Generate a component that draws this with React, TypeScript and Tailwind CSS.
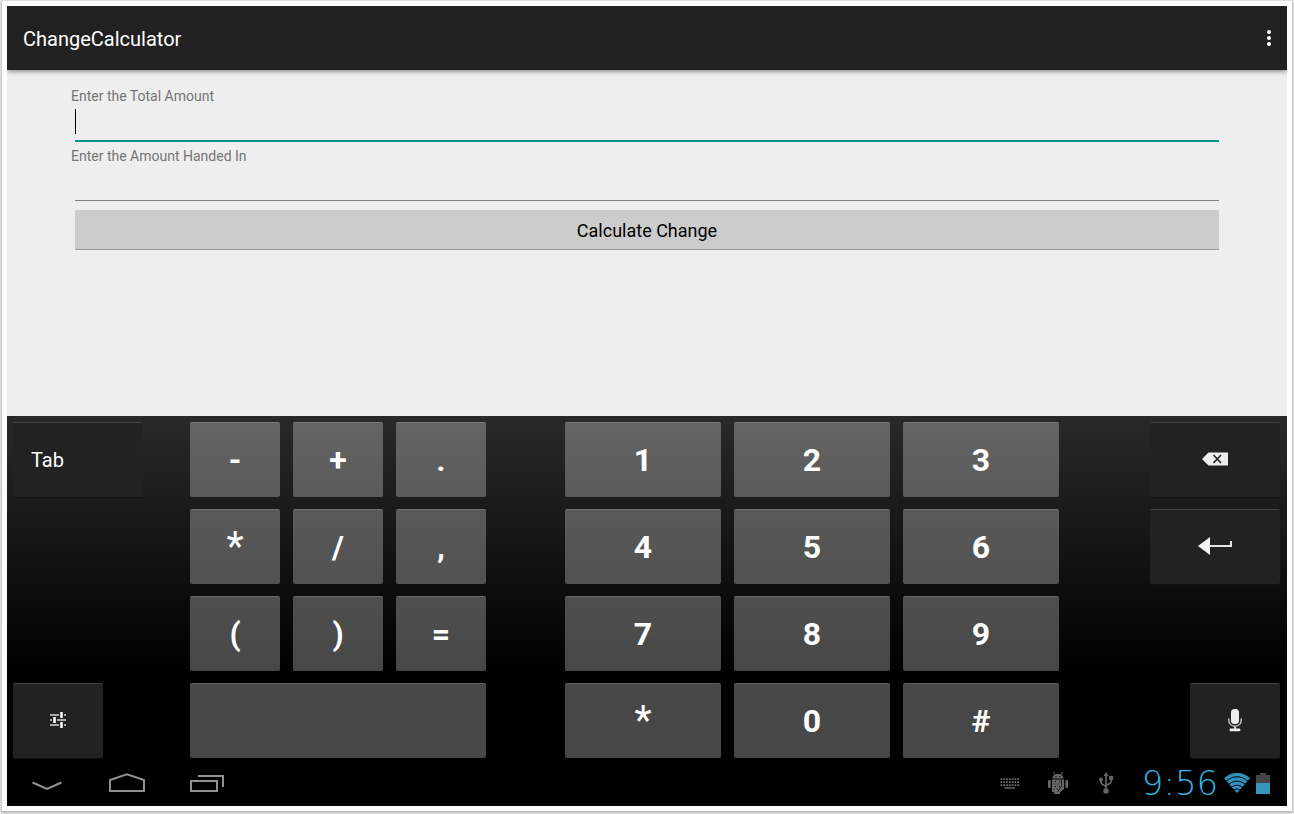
import { useState } from 'react';
import type { ReactNode } from 'react';

const SYMBOLS = ['-', '+', '.', '*', '/', ',', '(', ')', '='];
const DIGITS = ['1', '2', '3', '4', '5', '6', '7', '8', '9', '*', '0', '#'];

function LightKey({ label, name, className = '' }: { label: string; name?: string; className?: string }) {
  const face = label === '*' ? 'text-[40px] font-normal' : 'text-[32px] font-bold';
  return (
    <button
      type="button"
      aria-label={name}
      className={`h-[75px] rounded-xs border-t border-white/15 bg-white/28 text-center leading-[74px] text-white ${face} ${className}`}
    >
      {label}
    </button>
  );
}

function DarkKey({ name, className = '', children }: { name: string; className?: string; children: ReactNode }) {
  return (
    <button
      type="button"
      aria-label={name}
      className={`flex h-[75px] items-center rounded-xs border-t border-[#444] bg-[#222] text-xl text-white shadow-[0_1px_0_#111] ${className}`}
    >
      {children}
    </button>
  );
}

function BackspaceIcon() {
  return (
    <svg width="28" height="14" viewBox="0 0 28 14">
      <path d="M1 7 7.500 .5H27V13.500H7.500Z" fill="#eee" />
      <path d="m12.500 3 7.500 8m0-8-7.500 8" stroke="#222" strokeWidth="1.600" />
    </svg>
  );
}

function EnterIcon() {
  return (
    <svg width="36" height="20" viewBox="0 0 36 20">
      <path d="M1 10 13 1V19Z" fill="#f4f4f4" />
      <path d="M12 10H34V5" fill="none" stroke="#e4e4e4" strokeWidth="2" />
    </svg>
  );
}

function TuneIcon() {
  return (
    <svg width="16" height="16" viewBox="0 0 16 16">
      <path d="M0 3H9M14 3H16M0 8H2M7 8H16M0 13H9M14 13H16" stroke="#aaa" strokeWidth="2" />
      <path d="M11.500 0V6M4.500 5V11M11.500 10V16" stroke="#fff" strokeWidth="2.600" />
    </svg>
  );
}

function MicIcon() {
  return (
    <svg width="14" height="24" viewBox="0 0 14 24">
      <rect x="3" y="1" width="8" height="15" rx="3.500" fill="#eee" />
      <path d="M.8 10.500V12C.8 16 3.500 18.200 7 18.200S13.200 16 13.200 12V10.500" fill="none" stroke="#ccc" strokeWidth="1.400" />
      <path d="M7 18V21" stroke="#ccc" strokeWidth="2" />
      <rect x="1.500" y="20.500" width="11" height="2.800" rx="1.400" fill="#eee" />
    </svg>
  );
}

function KeyboardIcon() {
  return (
    <svg width="20" height="11" viewBox="0 0 20 11">
      <path d="M.5 1.200H20M.5 4.200H20M.5 7.200H20" stroke="#6a6a6a" strokeWidth="1.800" strokeDasharray="1.800 1" />
      <path d="M4.500 10H15" stroke="#6a6a6a" strokeWidth="1.400" />
    </svg>
  );
}

function DebugIcon() {
  return (
    <svg width="20" height="22" viewBox="0 0 20 22">
      <g fill="#666">
        <path d="M4.500 6.500C4.500 3.800 6.500 2 10 2S15.500 3.800 15.500 6.500Z" />
        <rect x="0" y="8" width="2.700" height="8" rx="1" />
        <rect x="17.300" y="8" width="2.700" height="8" rx="1" />
        <path d="M4 7.500H16V17L12 20V22H6V20H4Z" />
      </g>
      <path d="m5.500 0 1.500 3m7.500-3-1.500 3" stroke="#666" strokeWidth="1" />
      <path d="M7.500 4.500h1m3 0h1M7 9.500h1m3 0h1M5.500 12h1m3 0h1M7 14.500h1m3 0h1M5.500 17h1m2 0h1" stroke="#000" strokeWidth="1" />
      <path d="M13.500 8V14L9.500 20" fill="none" stroke="#222" strokeWidth="1" />
    </svg>
  );
}

function UsbIcon() {
  return (
    <svg width="20" height="22" viewBox="-2.500 0 20 22">
      <g fill="none" stroke="#666" strokeWidth="1.700">
        <path d="M7.500 3V19M2.500 8V10.500C2.500 13 7.500 13 7.500 15.500M12.700 7V9.500C12.700 12 7.500 12 7.500 14.500" />
      </g>
      <g fill="#666">
        <path d="M7.500 0 10 4H5Z" />
        <circle cx="2.500" cy="7.500" r="2" />
        <rect x="10.700" y="4" width="4" height="4" />
        <circle cx="7.500" cy="19" r="2.700" />
      </g>
    </svg>
  );
}

function WifiIcon() {
  return (
    <svg width="26" height="20" viewBox="0 0 26 20">
      <path d="M0 5.200C7-1.700 19-1.700 26 5.200L13 20Z" fill="#3093bf" />
      <path d="M2 8.300C8.500 2.300 17.500 2.300 24 8.300M4.500 11.500C9.500 7 16.500 7 21.500 11.500M7 14.700C10.500 11.500 15.500 11.500 19 14.700M9.500 17.500C11.500 15.500 14.500 15.500 16.500 17.500" fill="none" stroke="#000" strokeWidth="1" />
    </svg>
  );
}

function BatteryIcon() {
  return (
    <svg width="14" height="21" viewBox="0 0 14 21">
      <path d="M0 2H4V0H10V2H14V10H0Z" fill="#444" />
      <path d="M0 10H14V21H0Z" fill="#3694bd" />
    </svg>
  );
}

export default function App() {
  const [total, setTotal] = useState('');
  const [handed, setHanded] = useState('');

  return (
    <div className="flex min-h-screen flex-col bg-[#f2f2f2] px-0.5 pt-px pb-[3px] font-[Roboto,sans-serif]">
      <div className="flex grow flex-col bg-white p-[5px] shadow-[0_1px_2px_1px_#b4b4b4]">
        <header className="z-10 flex h-16 items-center justify-between bg-[#212121] pr-2 pl-4 shadow-[0_1px_5px_rgba(0,0,0,0.5)] [clip-path:inset(0_0_-10px_0)]">
          <h1 className="pt-0.5 text-xl text-white">ChangeCalculator</h1>
          <button type="button" aria-label="More options" className="flex size-5 items-center justify-center">
            <svg width="4" height="16" viewBox="0 0 4 16" fill="#fff">
              <circle cx="2" cy="2" r="2" />
              <circle cx="2" cy="8" r="2" />
              <circle cx="2" cy="14" r="2" />
            </svg>
          </button>
        </header>

        <main className="flex grow flex-col bg-[#eee] px-16 py-4">
          <label htmlFor="total" className="text-sm text-[#757575]">
            Enter the Total Amount
          </label>
          <div className="relative mx-1 mb-1 flex flex-col">
            <input
              id="total"
              inputMode="decimal"
              value={total}
              onChange={(e) => setTotal(e.target.value)}
              className="peer h-9 border-b-2 border-[#009688] bg-transparent text-lg outline-none"
            />
            {total === '' && <span className="pointer-events-none absolute top-[3px] left-0 h-[25px] w-px bg-black peer-focus:hidden" />}
          </div>
          <label htmlFor="handed" className="text-sm text-[#757575]">
            Enter the Amount Handed In
          </label>
          <input
            id="handed"
            inputMode="decimal"
            value={handed}
            onChange={(e) => setHanded(e.target.value)}
            className="mx-1 mb-[9px] h-[35px] border-b border-[#808080] bg-transparent text-lg outline-none"
          />
          <button type="button" className="mx-1 h-10 border-b border-[#999] bg-[#ccc] pt-0.5 text-lg text-black">
            Calculate Change
          </button>
        </main>

        <footer className="bg-black">
          <div className="grid grid-cols-[130fr_47fr_296fr_79fr_494fr_91fr_130fr] bg-linear-to-b/srgb from-[#292929] to-black to-75% pt-1.5 pr-[7px] pl-1.5">
            <div className="flex flex-col justify-between">
              <DarkKey name="Tab" className="pl-[18px]">
                Tab
              </DarkKey>
              <DarkKey name="Input settings" className="w-[90px] justify-center pb-0.5">
                <TuneIcon />
              </DarkKey>
            </div>
            <div className="col-start-3 grid grid-cols-3 gap-x-[13px] gap-y-3">
              {SYMBOLS.map((s) => (
                <LightKey key={s} label={s} />
              ))}
              <LightKey label="" name="Space" className="col-span-3" />
            </div>
            <div className="col-start-5 grid grid-cols-3 gap-x-[13px] gap-y-3">
              {DIGITS.map((d) => (
                <LightKey key={d} label={d} />
              ))}
            </div>
            <div className="col-start-7 flex flex-col gap-3">
              <DarkKey name="Backspace" className="justify-center pb-0.5">
                <BackspaceIcon />
              </DarkKey>
              <DarkKey name="Enter" className="justify-center pb-0.5">
                <EnterIcon />
              </DarkKey>
              <DarkKey name="Voice input" className="mt-auto w-[90px] justify-center self-end pb-0.5">
                <MicIcon />
              </DarkKey>
            </div>
          </div>

          <nav className="flex h-12 items-center justify-between pt-0.5 pr-[17px]">
            <div className="flex">
              <button type="button" aria-label="Hide keyboard" className="flex w-20 justify-center">
                <svg width="30" height="20" viewBox="0 0 30 20" fill="none" stroke="#919191" strokeWidth="2">
                  <path d="m.5 9.500 14.500 6.500 14.500-6.500" />
                </svg>
              </button>
              <button type="button" aria-label="Home" className="flex w-20 justify-center">
                <svg width="36" height="20" viewBox="0 0 36 20" fill="none" stroke="#919191" strokeWidth="2">
                  <path d="M1 18V7L18 1.200 35 7V18Z" />
                </svg>
              </button>
              <button type="button" aria-label="Recent apps" className="flex w-20 justify-center">
                <svg width="34" height="20" viewBox="0 0 34 20" fill="none" stroke="#919191" strokeWidth="2">
                  <path d="M1 8H27V18H1ZM8 3H33V14" />
                </svg>
              </button>
            </div>
            <div className="flex items-center">
              <div className="mr-6 flex items-center gap-7">
                <KeyboardIcon />
                <DebugIcon />
                <UsbIcon />
              </div>
              <time className="mr-1 w-20 text-center text-[34px] leading-none font-extralight text-[#33b5e5] [font-family:'DejaVu_Sans_Light','DejaVu_Sans',sans-serif]">
                9:56
              </time>
              <div className="flex items-center gap-1.5">
                <WifiIcon />
                <BatteryIcon />
              </div>
            </div>
          </nav>
        </footer>
      </div>
    </div>
  );
}
